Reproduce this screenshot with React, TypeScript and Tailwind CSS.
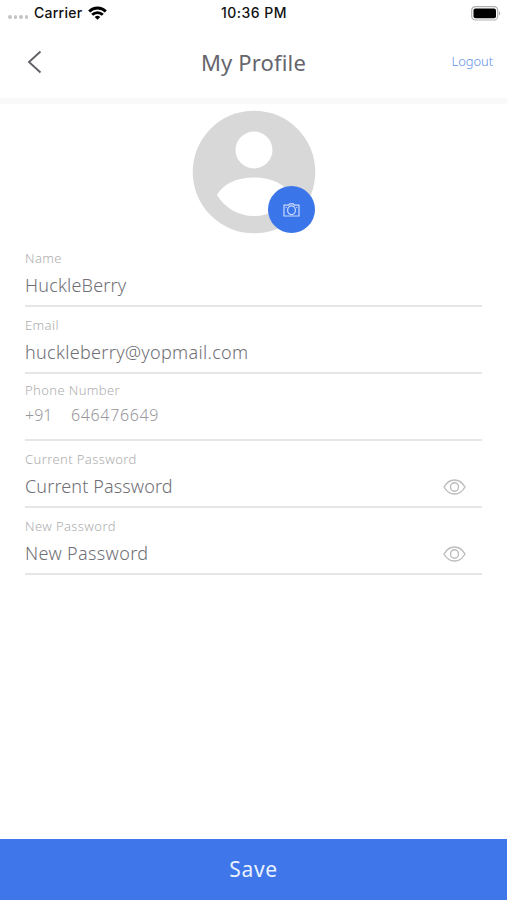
import React, { useState } from 'react';

const EyeIcon = () => (
  <svg width="23" height="16" viewBox="0 0 23 16" fill="none" stroke="#bdbdbd" strokeWidth="1.4">
    <path d="M1 8C3.600 3.400 7.200 1 11.500 1S19.400 3.400 22 8c-2.600 4.600-6.200 7-10.500 7S3.600 12.600 1 8z" strokeLinejoin="round" />
    <ellipse cx="11.500" cy="8" rx="4" ry="4.300" />
  </svg>
);

const CameraIcon = () => (
  <svg width="17" height="14" viewBox="0 0 17 14" fill="none" stroke="#c9dafc" strokeWidth="1.200">
    <path d="M1 2.200h4.700L6.600.9h3.800l.9 1.300H16V13H1z" />
    <ellipse cx="8.500" cy="7.300" rx="3.900" ry="4.400" />
    <path d="M2.500 4.500h1.500M13 4.500h1.500" strokeWidth="0.800" />
  </svg>
);

const StatusBar = () => (
  <div className="grid h-[26px] grid-cols-3 items-center pl-2 pr-[6px] font-['Inter',sans-serif] text-[14px] font-medium text-[#111]">
    <div className="-mt-px flex items-center">
      <div className="mt-[9px] flex gap-[2px]">
        {[0, 1, 2, 3].map((dot) => (
          <span key={dot} className="h-[3.500px] w-[3.500px] rounded-full bg-[#c4c4c4]" />
        ))}
      </div>
      <span className="ml-[6px] tracking-[0.25px]">Carrier</span>
      <svg className="ml-[6px]" width="19" height="14" viewBox="0 0 19 14" fill="none" stroke="#000" strokeWidth="2.900">
        <path d="M1.200 5.400a11.700 11.700 0 0 1 16.600 0" />
        <path d="M4.200 8.800a7.500 7.500 0 0 1 10.600 0" />
        <path d="M9.500 13.800L6.700 11a4 4 0 0 1 5.600 0z" fill="#000" stroke="none" />
      </svg>
    </div>
    <span className="-mt-[2px] -ml-px text-center tracking-[0.45px]">10:36 PM</span>
    <svg className="ml-auto" width="30" height="15" viewBox="0 0 30 15">
      <rect x="0.700" y="0.700" width="26" height="13.300" rx="3.600" fill="none" stroke="#b0b0b0" strokeWidth="1.200" />
      <rect x="2.500" y="2.500" width="22.500" height="9.700" rx="2" fill="#000" />
      <path d="M28 5.200c1.600.7 1.600 3.600 0 4.300z" fill="#aaa" />
    </svg>
  </div>
);

type FieldProps = {
  label: string;
  labelClass: string;
  children: React.ReactNode;
};

const Field = ({ label, labelClass, children }: FieldProps) => (
  <div className="h-[67px] border-b-2 border-[#e6e6e6]">
    <div className={`text-[13px] leading-[18px] tracking-[0.4px] text-[#adadad] ${labelClass}`}>{label}</div>
    {children}
  </div>
);

export default function App() {
  const [name, setName] = useState('HuckleBerry');
  const [email, setEmail] = useState('huckleberry@yopmail.com');
  const [visible, setVisible] = useState({ current: true, next: true });

  const inputClass = 'block w-full bg-transparent p-0 outline-none placeholder:text-[#6f6f75]';

  return (
    <div className="flex h-[900px] w-[507px] flex-col bg-white font-['Noto_Sans',sans-serif] font-light">
      <StatusBar />

      {/* Header */}
      <header className="grid h-[72px] grid-cols-[1fr_auto_1fr] items-center px-[14px]">
        <button aria-label="Back" className="ml-3 w-4">
          <svg width="16" height="24" viewBox="0 0 16 24" fill="none" stroke="#606066" strokeWidth="1.900">
            <path d="M14.500 1.500L3 12l11.500 10.500" />
          </svg>
        </button>
        <h1 className="text-[22px] font-normal leading-[30px] tracking-[0.15px] text-[#65656b]">My Profile</h1>
        <button className="justify-self-end text-[13px] tracking-[-0.1px] text-[#6691ec]">Logout</button>
      </header>
      <div className="h-[6px] bg-[#f9f9f9]" />

      {/* Avatar */}
      <div className="relative mx-auto mt-[6px] h-[124px] w-[124px]">
        <svg width="124" height="124" viewBox="0 0 124 124">
          <circle cx="62" cy="62" r="61.300" fill="#d8d8d8" />
          <circle cx="62" cy="40" r="18.500" fill="#fff" />
          <path d="M25 85C31 74 44 67.500 62 67.500s31 6.500 37 17.500c-8 13-21 21-37 21S33 98 25 85z" fill="#fff" />
        </svg>
        <button aria-label="Change photo" className="absolute left-[76.500px] top-[76px] flex h-[47px] w-[47px] items-center justify-center rounded-full bg-[#3b75ea]">
          <CameraIcon />
        </button>
      </div>

      {/* Form */}
      <form className="mx-[25px] mt-[6px] flex-1 text-[18px] leading-[24px] text-[#6f6f75]">
        <Field label="Name" labelClass="pt-[9px]">
          <input value={name} onChange={(e) => setName(e.target.value)} className={`${inputClass} mt-[6px] tracking-[0.2px]`} />
        </Field>
        <Field label="Email" labelClass="pt-[9px]">
          <input value={email} onChange={(e) => setEmail(e.target.value)} className={`${inputClass} mt-[6px] tracking-[0.32px]`} />
        </Field>
        <Field label="Phone Number" labelClass="pt-[7px]">
          <div className="mt-[4px] flex text-[16px] text-[#98989c]">
            <span className="w-[46px]">+91</span>
            <span className="tracking-[0.65px]">646476649</span>
          </div>
        </Field>
        <Field label="Current Password" labelClass="pt-[9px]">
          <div className="mt-[6px] flex items-center pr-[16px]">
            <input type={visible.current ? 'text' : 'password'} placeholder="Current Password" className={`${inputClass} tracking-[0.12px]`} />
            <button type="button" aria-label="Show current password" className="pt-px" onClick={() => setVisible({ ...visible, current: !visible.current })}>
              <EyeIcon />
            </button>
          </div>
        </Field>
        <Field label="New Password" labelClass="pt-[9px]">
          <div className="mt-[6px] flex items-center pr-[16px]">
            <input type={visible.next ? 'text' : 'password'} placeholder="New Password" className={`${inputClass} tracking-[0.35px]`} />
            <button type="button" aria-label="Show new password" className="pt-px" onClick={() => setVisible({ ...visible, next: !visible.next })}>
              <EyeIcon />
            </button>
          </div>
        </Field>
      </form>

      <button className="h-[61px] bg-[#3f76ea] text-[21px] font-normal tracking-[0.7px] text-[#eaf1ff]">Save</button>
    </div>
  );
}
